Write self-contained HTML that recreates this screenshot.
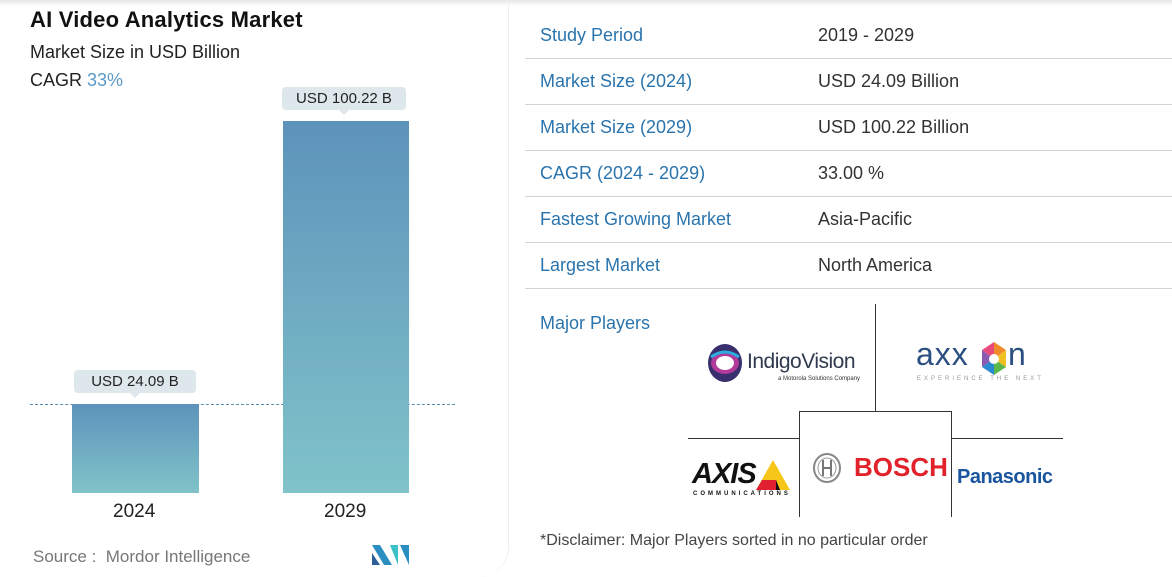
<!DOCTYPE html>
<html><head><meta charset="utf-8"><style>
body{margin:0;width:1172px;height:577px;background:#fff;font-family:"Liberation Sans",sans-serif;position:relative;overflow:hidden;color:#222}
.a{position:absolute;white-space:nowrap}
.lbl{color:#2a74ad;font-size:18px}
.val{color:#333;font-size:18px}
.hr{position:absolute;left:525px;width:647px;height:1px;background:#d4d4d4}
.bar{position:absolute;background:linear-gradient(#5d93bb,#80c3c9)}
.tip{position:absolute;background:#dde7ec;border-radius:4px;font-size:15px;color:#222;text-align:center;line-height:23px}
.tip:after{content:"";position:absolute;left:50%;bottom:-5px;margin-left:-5px;border:5px solid transparent;border-bottom:0;border-top-color:#dde7ec}
</style></head><body>
<div class="a" style="left:0;top:0;width:1172px;height:6px;background:linear-gradient(#e6e6e6,#fff)"></div>
<div class="a" style="left:0;top:0;width:508px;height:577px;border-right:1px solid #eee;border-bottom-right-radius:30px"></div>
<div class="a" style="left:30px;top:7px;font-size:22px;font-weight:bold;color:#111;letter-spacing:0.2px">AI Video Analytics Market</div>
<div class="a" style="left:30px;top:42px;font-size:18px">Market Size in USD Billion</div>
<div class="a" style="left:30px;top:70px;font-size:18px">CAGR <span style="color:#5a9ac8">33%</span></div>
<div class="a" style="left:30px;top:404px;width:425px;border-top:1px dashed #5a8fb5"></div>
<div class="bar" style="left:72px;top:404px;width:127px;height:89px"></div>
<div class="bar" style="left:283px;top:121px;width:126px;height:372px"></div>
<div class="tip" style="left:74px;top:370px;width:122px">USD 24.09 B</div>
<div class="tip" style="left:282px;top:87px;width:124px">USD 100.22 B</div>
<div class="a" style="left:113px;top:501px;font-size:19px">2024</div>
<div class="a" style="left:324px;top:501px;font-size:19px">2029</div>
<div class="a" style="left:33px;top:547px;font-size:17px;color:#777">Source :&nbsp; Mordor Intelligence</div>
<svg class="a" style="left:372px;top:545px" width="37" height="20"><polygon points="0,0 8,0 20,20 12,20" fill="#2a8fc0"/><polygon points="0,8 8,20 0,20" fill="#2a5f9a"/><polygon points="18,0 26,0 26,20" fill="#3cc0c8"/><polygon points="28,0 37,0 37,20" fill="#2a8fc0"/></svg>

<div class="a lbl" style="left:540px;top:25px">Study Period</div><div class="a val" style="left:818px;top:25px">2019 - 2029</div>
<div class="hr" style="top:58px"></div>
<div class="a lbl" style="left:540px;top:71px">Market Size (2024)</div><div class="a val" style="left:818px;top:71px">USD 24.09 Billion</div>
<div class="hr" style="top:104px"></div>
<div class="a lbl" style="left:540px;top:117px">Market Size (2029)</div><div class="a val" style="left:818px;top:117px">USD 100.22 Billion</div>
<div class="hr" style="top:150px"></div>
<div class="a lbl" style="left:540px;top:163px">CAGR (2024 - 2029)</div><div class="a val" style="left:818px;top:163px">33.00 %</div>
<div class="hr" style="top:196px"></div>
<div class="a lbl" style="left:540px;top:209px">Fastest Growing Market</div><div class="a val" style="left:818px;top:209px">Asia-Pacific</div>
<div class="hr" style="top:242px"></div>
<div class="a lbl" style="left:540px;top:255px">Largest Market</div><div class="a val" style="left:818px;top:255px">North America</div>
<div class="hr" style="top:288px"></div>
<div class="a lbl" style="left:540px;top:313px">Major Players</div>

<div class="a" style="left:875px;top:304px;width:1px;height:107px;background:#333"></div>
<div class="a" style="left:688px;top:438px;width:111px;height:1px;background:#333"></div>
<div class="a" style="left:951px;top:438px;width:112px;height:1px;background:#333"></div>
<div class="a" style="left:799px;top:411px;width:151px;height:105px;border:1px solid #333;border-bottom:0"></div>

<svg class="a" style="left:707px;top:343px" width="36" height="40"><ellipse cx="18" cy="20" rx="17" ry="19" fill="#3a2f6e"/><ellipse cx="18" cy="20" rx="14" ry="11" fill="#b13a9a"/><ellipse cx="18" cy="20" rx="9" ry="7" fill="#fff"/><path d="M4 14 Q18 4 32 14" stroke="#27b0e0" stroke-width="3" fill="none"/></svg>
<div class="a" style="left:747px;top:350px;font-size:21px;color:#2f3a4f;letter-spacing:-0.5px">IndigoVision</div>
<div class="a" style="left:778px;top:376px;font-size:6px;color:#333">a Motorola Solutions Company</div>

<div class="a" style="left:916px;top:336px;font-size:32px;color:#2a4f80;letter-spacing:1px">axx</div>
<svg class="a" style="left:981px;top:342px" width="26" height="34"><polygon points="13,0 25,8 13,17" fill="#f08a2a"/><polygon points="13,0 1,8 13,17" fill="#e84a7a"/><polygon points="1,8 1,25 13,17" fill="#8a5ab0"/><polygon points="1,25 13,33 13,17" fill="#2a8ad0"/><polygon points="13,33 25,25 13,17" fill="#5ab84a"/><polygon points="25,25 25,8 13,17" fill="#f0c020"/><circle cx="13" cy="17" r="5" fill="#fff"/></svg>
<div class="a" style="left:1008px;top:336px;font-size:32px;color:#2a4f80">n</div>
<div class="a" style="left:917px;top:376px;font-size:6px;color:#999;letter-spacing:3px">EXPERIENCE THE NEXT</div>

<div class="a" style="left:692px;top:458px;font-size:29px;font-weight:bold;font-style:italic;color:#111;letter-spacing:-1px">AXIS</div>
<svg class="a" style="left:756px;top:460px" width="34" height="30"><polygon points="17,0 34,30 0,30" fill="#f5c518"/><polygon points="6,20 20,20 24,30 0,30" fill="#e02030"/><polygon points="20,20 24,30 20,30" fill="#111"/></svg>
<div class="a" style="left:693px;top:491px;font-size:6px;font-weight:bold;letter-spacing:3px;color:#111">COMMUNICATIONS</div>

<svg class="a" style="left:813px;top:453px" width="28" height="30"><ellipse cx="14" cy="15" rx="13" ry="14" fill="none" stroke="#888" stroke-width="2"/><ellipse cx="14" cy="15" rx="9" ry="10" fill="none" stroke="#999"/><path d="M10 7v16M18 7v16M10 15h8" stroke="#777" stroke-width="2"/></svg>
<div class="a" style="left:854px;top:452px;font-size:26px;font-weight:bold;color:#e2222a">BOSCH</div>
<div class="a" style="left:957px;top:466px;font-size:20px;font-weight:bold;color:#1a55a0;letter-spacing:-0.5px">Panasonic</div>

<div class="a" style="left:540px;top:532px;font-size:16px;color:#444">*Disclaimer: Major Players sorted in no particular order</div>
</body></html>
